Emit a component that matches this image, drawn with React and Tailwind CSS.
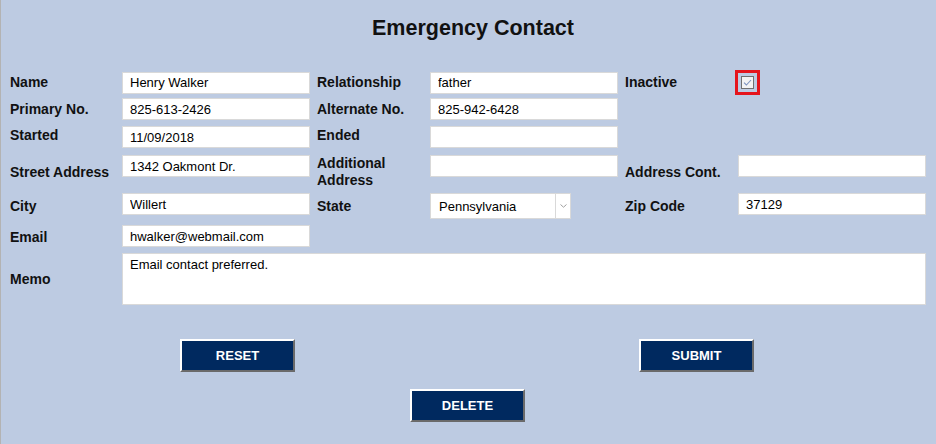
import { useState } from 'react';

const labelCls = "text-[14px] font-bold leading-[17px] text-[#111]";
const inputCls =
  "h-[22px] w-[188px] bg-white border border-[#d9d9d9] px-[7px] text-[13px] text-black outline-none font-['Liberation_Sans',Arial,sans-serif]";

function Field({ value, className = "" }) {
  return <input readOnly value={value} className={`${inputCls} ${className}`} />;
}

function FormButton({ children, className = "" }) {
  return (
    <button
      type="button"
      className={`h-[33px] w-[115px] bg-[#00295f] border-2 border-t-white border-l-white border-r-[#6a6a6a] border-b-[#6a6a6a] text-[13px] font-bold text-white ${className}`}
    >
      {children}
    </button>
  );
}

export default function App() {
  const [inactive, setInactive] = useState(true);

  return (
    <div className="w-[936px] h-[444px] bg-[#bdcbe2] border-l border-[#b3b3b3] pl-[9px] font-['Liberation_Sans',Arial,sans-serif] text-black overflow-hidden">
      <h1 className="pt-[16px] text-center text-[21.5px] font-bold leading-[24px] text-[#111]">
        Emergency Contact
      </h1>

      <div className="mt-[30px] w-[916px]">
        {/* Name / Relationship / Inactive */}
        <div className="grid grid-cols-[112px_195px_113px_195px_113px_188px] h-[22px] items-center">
          <span className={`${labelCls} -mt-[1px]`}>Name</span>
          <Field value="Henry Walker" />
          <span className={`${labelCls} -mt-[1px]`}>Relationship</span>
          <Field value="father" />
          <span className={`${labelCls} -mt-[1px]`}>Inactive</span>
          <div className="-ml-[3px] flex">
            <button
              type="button"
              onClick={() => setInactive(!inactive)}
              className="w-[25px] h-[25px] border-[3px] border-[#e5141c] flex items-center justify-center"
            >
              <span className="w-[13px] h-[13px] bg-[#f3f3f3] border border-[#707070] flex items-center justify-center">
                {inactive && (
                  <svg width="9" height="7" viewBox="0 0 9 7" fill="none">
                    <path d="M1 3.6 L3.4 6 L8 1" stroke="#7d93bf" strokeWidth="1.1" />
                  </svg>
                )}
              </span>
            </button>
          </div>
        </div>

        {/* Phones */}
        <div className="mt-[6px] grid grid-cols-[112px_195px_113px_195px_113px_188px] h-[22px] items-center">
          <span className={labelCls}>Primary No.</span>
          <Field value="825-613-2426" />
          <span className={labelCls}>Alternate No.</span>
          <Field value="825-942-6428" />
        </div>

        {/* Dates */}
        <div className="mt-[6px] grid grid-cols-[112px_195px_113px_195px_113px_188px] h-[22px] items-center">
          <span className={`${labelCls} -mt-[4px]`}>Started</span>
          <Field value="11/09/2018" />
          <span className={`${labelCls} -mt-[4px]`}>Ended</span>
          <Field value="" />
        </div>

        {/* Address */}
        <div className="mt-[7px] grid grid-cols-[112px_195px_113px_195px_113px_188px] h-[33px] items-center">
          <span className={labelCls}>Street Address</span>
          <Field value="1342 Oakmont Dr." className="self-start" />
          <span className={labelCls}>
            Additional
            <br />
            Address
          </span>
          <Field value="" className="self-start" />
          <span className={labelCls}>Address Cont.</span>
          <Field value="" className="self-start" />
        </div>

        {/* City / State / Zip */}
        <div className="mt-[5px] grid grid-cols-[112px_195px_113px_195px_113px_188px] h-[26px] items-center">
          <span className={labelCls}>City</span>
          <Field value="Willert" className="self-start" />
          <span className={labelCls}>State</span>
          <div className="h-[26px] w-[141px] bg-white border border-[#d9d9d9] flex items-center">
            <span className="flex-1 pl-[8px] pt-[2px] text-[13px]">Pennsylvania</span>
            <span className="h-full w-[15px] border-l border-[#d9d9d9] flex items-center justify-center">
              <svg width="7" height="4" viewBox="0 0 7 4" fill="none">
                <path d="M0.5 0.5 L3.5 3.2 L6.5 0.5" stroke="#a0a0a0" strokeWidth="1" />
              </svg>
            </span>
          </div>
          <span className={labelCls}>Zip Code</span>
          <Field value="37129" className="self-start" />
        </div>

        {/* Email */}
        <div className="mt-[6px] grid grid-cols-[112px_195px_113px_195px_113px_188px] h-[22px] items-center">
          <span className={`${labelCls} mt-[3px]`}>Email</span>
          <Field value="hwalker@webmail.com" />
        </div>

        {/* Memo */}
        <div className="mt-[6px] flex h-[52px] items-center">
          <span className={`${labelCls} w-[112px]`}>Memo</span>
          <textarea
            readOnly
            value="Email contact preferred."
            className="h-[52px] w-[804px] resize-none bg-white border border-[#d9d9d9] px-[7px] pt-[3px] text-[13px] leading-[16px] outline-none font-['Liberation_Sans',Arial,sans-serif]"
          />
        </div>

        {/* Actions */}
        <div className="mt-[34px] flex">
          <FormButton className="ml-[170px]">RESET</FormButton>
          <FormButton className="ml-[344px]">SUBMIT</FormButton>
        </div>
        <div className="mt-[17px] flex">
          <FormButton className="ml-[400px]">DELETE</FormButton>
        </div>
      </div>
    </div>
  );
}
